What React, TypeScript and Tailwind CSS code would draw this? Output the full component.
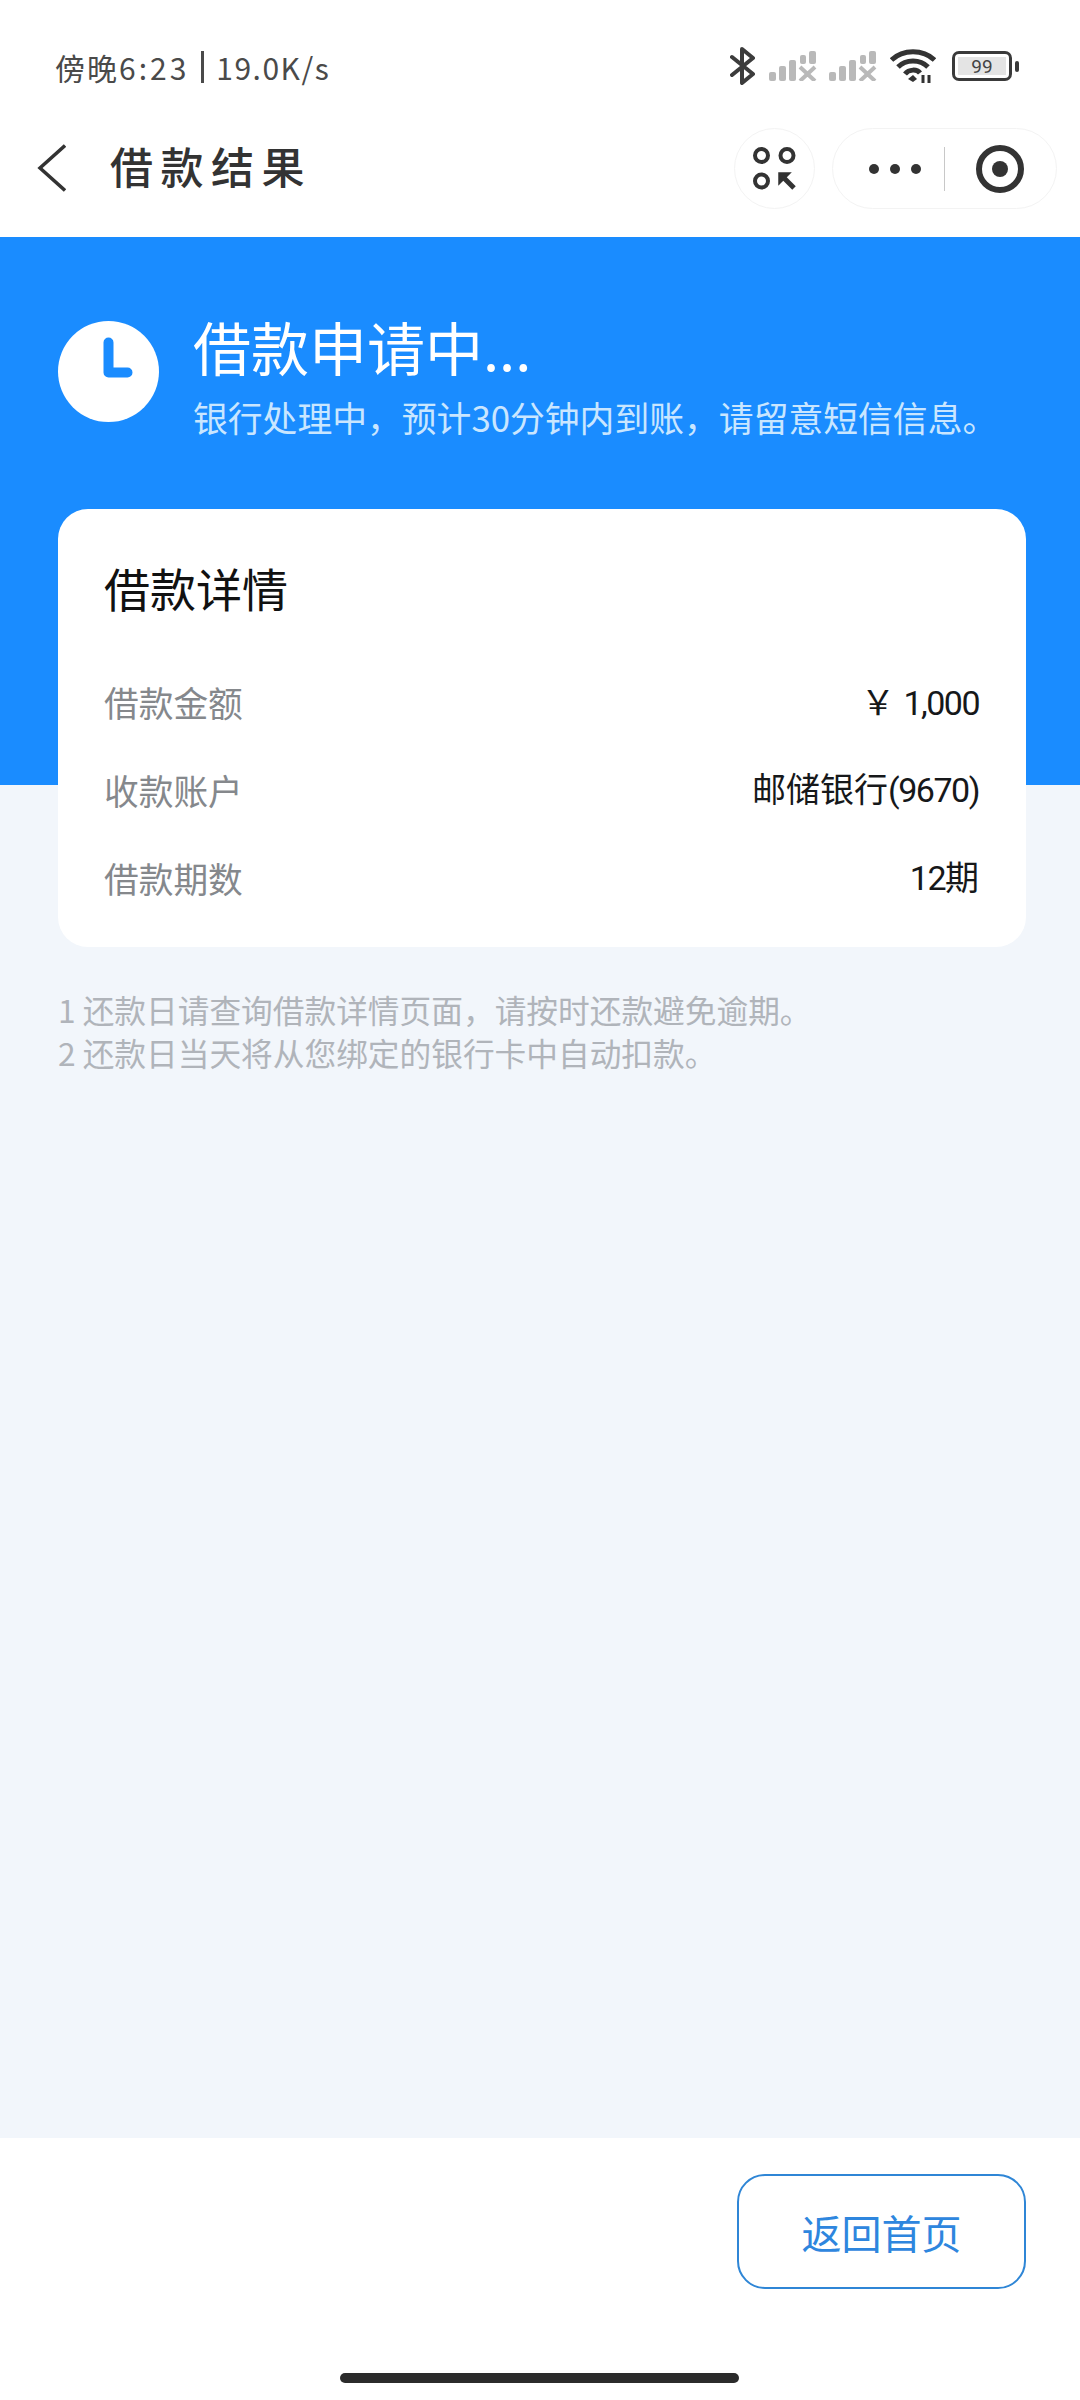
import type { ReactNode } from "react";

const cjk = { fontFamily: '"Noto Sans CJK SC", "Noto Sans", sans-serif' };
const latin = { fontFamily: 'Roboto, "Noto Sans CJK SC", sans-serif' };
const comma = "\uFF0C";
const yen = "\uFFE5";

function Signal() {
  return (
    <svg width="48" height="30" viewBox="0 0 48 30" fill="#b9b9b9">
      <rect x="0" y="21" width="7" height="9" rx="2" />
      <rect x="10" y="15" width="7" height="15" rx="2" />
      <rect x="20" y="9" width="7" height="21" rx="2" />
      <rect x="31" y="4" width="6" height="9" rx="2" />
      <rect x="40" y="0" width="7" height="13" rx="2" />
      <path d="M31 16 L46 30 M46 16 L31 30" stroke="#b9b9b9" strokeWidth="4" fill="none" />
    </svg>
  );
}

function Row({ label, value }: { label: string; value: ReactNode }) {
  return (
    <div className="flex h-[88px] items-center justify-between">
      <span className="text-[34.7px] text-[#85888c]">{label}</span>
      <span className="text-[34px] text-[#16181a]" style={latin}>{value}</span>
    </div>
  );
}

const Digits = ({ children }: { children: ReactNode }) => (
  <span className="tracking-[-1.5px]">{children}</span>
);

export default function App() {
  return (
    <div className="flex h-[2400px] w-[1080px] flex-col overflow-hidden bg-[#f2f6fb]" style={cjk}>
      <header className="h-[237px] shrink-0 bg-white">
        <div className="flex h-[114px] items-start justify-between pl-[55px] pr-[61px] pt-[47px]">
          <div className="flex items-center text-[30px] leading-[40px] tracking-[1.5px] text-[#4a4a4a]">
            <span className="tracking-[2px]">傍晚</span>
            <span className="tracking-[3px]">6:23</span>
            <span className="mx-[12px] h-[32px] w-[3px] bg-[#4a4a4a]" />
            <span>19.0K/s</span>
          </div>
          <div className="flex items-center">
            <svg width="26" height="38" viewBox="0 0 26 38" fill="none" stroke="#3c3c3c" strokeWidth="4" strokeLinejoin="round" strokeLinecap="round">
              <path d="M2 10 L23 27 L12 36 V2 L23 11 L2 28" />
            </svg>
            <div className="ml-[13px]"><Signal /></div>
            <div className="ml-[12px]"><Signal /></div>
            <svg className="ml-[13px]" width="46" height="34" viewBox="0 0 46 34" fill="none" stroke="#333" strokeWidth="5">
              <path d="M1.5 11 C13 0 33 0 44.5 11" />
              <path d="M8 18 C16 10 30 10 38 18" />
              <path d="M15 25 C19 20 27 20 30 24" />
              <path d="M18 30 L23 26 L27 30 L23 33 Z" fill="#333" stroke="none" />
              <path d="M33 26 V34 M39 26 V34" strokeWidth="3" />
            </svg>
            <div className="ml-[16px] flex h-[30px] w-[60px] items-center justify-center rounded-[7px] border-[3.5px] border-[#3a3a3a] p-[3px]">
              <div className="flex h-full w-full items-center justify-center bg-[#e4e4e4] text-[19px] leading-none text-[#444]" style={latin}>99</div>
            </div>
            <div className="ml-[3px] h-[11px] w-[4px] rounded-sm bg-[#3a3a3a]" />
          </div>
        </div>
        <nav className="mt-[14px] flex h-[81px] items-center pl-[37px] pr-[23px]">
          <svg className="-mt-[2px]" width="29" height="48" viewBox="0 0 29 48" fill="none" stroke="#333" strokeWidth="3.5">
            <path d="M28 1.5 L3 24 L28 46.5" />
          </svg>
          <h1 className="-mt-[7px] ml-[44px] text-[43px] font-medium leading-none tracking-[7.5px] text-[#333]">借款结果</h1>
          <div className="ml-auto flex items-center gap-[17px]">
            <div className="flex h-[81px] w-[81px] items-center justify-center rounded-full border border-[#f3f3f3]">
              <svg width="44" height="44" viewBox="0 0 44 44" fill="none" stroke="#333" strokeWidth="4">
                <circle cx="8.5" cy="8.5" r="6.5" />
                <circle cx="34" cy="8.5" r="6.5" />
                <circle cx="8.5" cy="34" r="6.5" />
                <path d="M26 26 H37 L26 37 Z" fill="#333" strokeWidth="1.5" />
                <path d="M29 29 L41 41" strokeWidth="5" />
              </svg>
            </div>
            <div className="flex h-[81px] w-[225px] items-center rounded-full border border-[#f3f3f3]">
              <div className="ml-[36px] flex gap-[11px]">
                <span className="h-[10px] w-[10px] rounded-full bg-[#333]" />
                <span className="h-[10px] w-[10px] rounded-full bg-[#333]" />
                <span className="h-[10px] w-[10px] rounded-full bg-[#333]" />
              </div>
              <div className="ml-[23px] h-[44px] w-[1px] bg-[#c8c8c8]" />
              <div className="ml-[31px] flex h-[48px] w-[48px] items-center justify-center rounded-full border-[6px] border-[#333]">
                <span className="h-[16px] w-[16px] rounded-full bg-[#333]" />
              </div>
            </div>
          </div>
        </nav>
      </header>

      <main className="flex-1">
        <section className="h-[548px] bg-[#1a8cff] px-[58px] pt-[84px]">
          <div className="flex items-start gap-[34px]">
            <div className="flex h-[101px] w-[101px] shrink-0 items-center justify-center rounded-full bg-white">
              <svg width="80" height="80" viewBox="0 0 80 80" fill="none" stroke="#1a8cff" strokeWidth="10" strokeLinecap="round" strokeLinejoin="round">
                <path d="M39.5 10.5 V40.5 H58.5" />
              </svg>
            </div>
            <div className="-mt-[11px]">
              <div className="text-[58px] leading-[72px] text-white">借款申请中...</div>
              <div className="mt-[15px] text-[34.8px] leading-[40px] text-[#c9e6ff]">银行处理中{comma}预计30分钟内到账{comma}请留意短信信息。</div>
            </div>
          </div>
        </section>

        <div className="relative -mt-[276px] ml-[58px] mr-[54px] h-[438px] rounded-[30px] bg-white pl-[46px] pr-[47px] pt-[50px]">
          <h2 className="text-[46px] leading-[56px] text-[#111]">借款详情</h2>
          <div className="mt-[43px]">
            <Row label="借款金额" value={<><span style={cjk}>{yen}</span> <Digits>1,000</Digits></>} />
            <Row label="收款账户" value={<>邮储银行<Digits>(9670)</Digits></>} />
            <Row label="借款期数" value={<><Digits>12</Digits>期</>} />
          </div>
        </div>

        <div className="ml-[58px] mt-[41px] text-[31.7px] leading-[43px] text-[#b0b4ba]">
          <p>1 还款日请查询借款详情页面{comma}请按时还款避免逾期。</p>
          <p>2 还款日当天将从您绑定的银行卡中自动扣款。</p>
        </div>
      </main>

      <footer className="flex h-[262px] shrink-0 flex-col bg-white">
        <div className="flex justify-end pr-[54px] pt-[36px]">
          <button className="flex h-[115px] w-[289px] items-center justify-center rounded-[28px] border-2 border-[#2f86d6] text-[40px] text-[#2e86de]">返回首页</button>
        </div>
        <div className="ml-[340px] mt-[84px] h-[10px] w-[399px] rounded-full bg-[#2b2b2b]" />
      </footer>
    </div>
  );
}
